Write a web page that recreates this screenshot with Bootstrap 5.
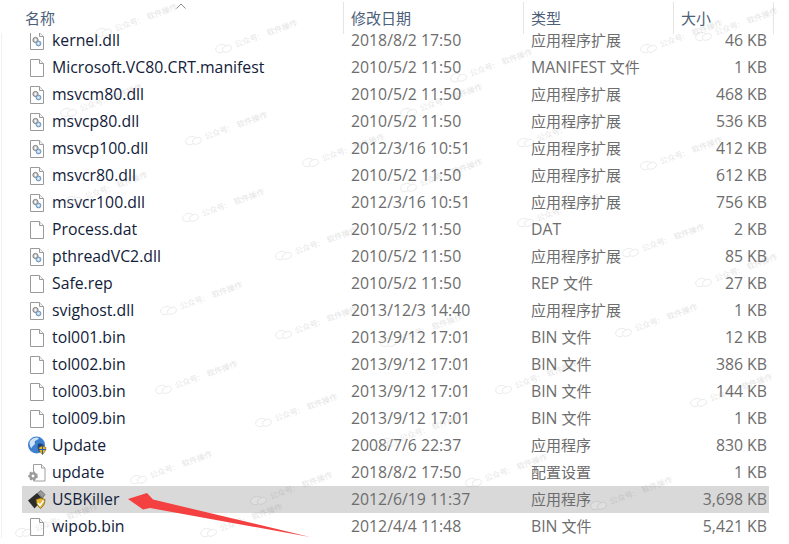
<!DOCTYPE html>
<html lang="zh-CN">
<head>
  <meta charset="UTF-8">
  <meta name="viewport" content="width=device-width, initial-scale=1">
  <title>USBKiller</title>
  <link href="https://cdn.jsdelivr.net/npm/bootstrap@5.3.0/dist/css/bootstrap.min.css" rel="stylesheet">
  <style>
    html, body { height: 100%; }
    body { background: #fff; font-family: "Open Sans", "Noto Sans CJK SC", sans-serif; font-size: 15.8px; overflow: hidden; position: relative; }
    .head-bar { height: 33px; padding-left: 2px; color: #4c607a; position: relative; z-index: 2; background: #fff; font-size: 15px; }
    .head-cell { height: 32px; margin-top: 2px; padding-top: 5px; border-right: 1px solid #e5e5e5; }
    .head-name { width: 342px; padding-left: 23px; }
    .head-date { width: 180px; padding-left: 7px; }
    .head-type { width: 150px; padding-left: 7px; }
    .head-size { width: 100px; padding-left: 7px; }
    .sort-caret { position: absolute; left: 176px; top: 3px; }
    .file-list { margin-left: 1px; border-left: 1px solid #f0f0f0; height: 511px; }
    .file-rows { margin-top: -6px; padding-left: 20px; }
    .file-row { height: 27px; width: 747px; line-height: 27px; color: #6d6d6d; white-space: nowrap; }
    .file-row.picked { background: #d9d9d9; }
    .col-name { width: 329px; color: #12213a; display: flex; align-items: center; }
    .col-name svg { margin: 0 5px 0 5px; flex: none; }
    .col-date { width: 180px; }
    .col-type { width: 150px; font-size: 15px; }
    .col-type span { font-size: 15.8px; }
    .col-size { width: 86px; text-align: right; }
    .stamp { position: absolute; display: flex; align-items: center; gap: 3px; opacity: .16; transform: rotate(-20deg); transform-origin: left center; white-space: nowrap; pointer-events: none; font-size: 8px; color: #555; line-height: 1; z-index: 3; }
    .stamp span { margin-right: 5px; }
    .pointer-arrow { position: absolute; left: 0; top: 0; pointer-events: none; z-index: 4; }
  </style>
</head>
<body>
  <svg width="0" height="0" class="position-absolute">
    <symbol id="i-blank" viewBox="0 0 20 20">
      <path d="M3.500 1.500h9l4 4v13h-13z" fill="#fff" stroke="#9a9a9a"/>
      <path d="M12.500 1.500v4h4" fill="#f2f2f2" stroke="#9a9a9a"/>
    </symbol>
    <symbol id="i-dll" viewBox="0 0 20 20">
      <path d="M3.500 1.500h9l4 4v13h-13z" fill="#fff" stroke="#9a9a9a"/>
      <path d="M12.500 1.500v4h4" fill="#f2f2f2" stroke="#9a9a9a"/>
      <circle cx="8.500" cy="9" r="2.600" fill="#cfcfcf" stroke="#7d7d7d"/>
      <circle cx="8.500" cy="9" r=".9" fill="#fff"/>
      <circle cx="11.500" cy="12.500" r="2.400" fill="#b4d0e8" stroke="#6b93b8"/>
      <circle cx="11.500" cy="12.500" r=".8" fill="#fff"/>
    </symbol>
    <symbol id="i-globe" viewBox="0 0 20 20">
      <circle cx="9.500" cy="9" r="8.500" fill="#3f7fd0"/>
      <path d="M3 5c3-4 7-4 9-3-1 2-3 2-4 3s1 3-1 4-2 3-3 3c-1-2-2-4-1-7z" fill="#cfe3f7"/>
      <path d="M11 8c3-1 5 0 6 2-1 3-3 5-5 6-1-2-2-6-1-8z" fill="#16447f"/>
      <path d="M12 11.500l3.500-1.500 3.500 1.500c0 3-1.500 5-3.500 7-2-2-3.500-4-3.500-7z" fill="#f0b429" stroke="#8a6510" stroke-width=".6"/>
      <path d="M15.500 10v8.500M12 13.500h7" stroke="#2d5fa5" stroke-width="1"/>
    </symbol>
    <symbol id="i-conf" viewBox="0 0 20 20">
      <path d="M6.500 1.500h8l3.500 3.500v13h-11.500z" fill="#fff" stroke="#a0a0a0"/>
      <path d="M14.500 1.500v3.500h3.500" fill="#f2f2f2" stroke="#a0a0a0"/>
      <circle cx="6" cy="13" r="3.800" fill="#9a9a9a" stroke="#9a9a9a" stroke-width="2" stroke-dasharray="2 1.500"/>
      <circle cx="6" cy="13" r="1.400" fill="#fff"/>
    </symbol>
    <symbol id="i-usb" viewBox="0 0 20 20">
      <path d="M1 10.500l9-7.500 6 6-8.500 9.500z" fill="#2b2b2b"/>
      <path d="M10.500 3l3.500-2.500 4 4-2.500 3.500z" fill="#9a9a9a" stroke="#4a4a4a" stroke-width=".6"/>
      <path d="M9 9.500l4.500-1.500 4.500 1.500c0 4.500-2 7-4.500 9-2.500-2-4.500-4.500-4.500-9z" fill="#e5b531" stroke="#6d5512" stroke-width=".7"/>
      <path d="M11 13l2 2.500 3.500-5" fill="none" stroke="#fff" stroke-width="1.500"/>
    </symbol>
    <symbol id="i-cloud" viewBox="0 0 22 14">
      <ellipse cx="8" cy="6" rx="7" ry="5" fill="#fff" stroke="#777"/>
      <ellipse cx="15" cy="9" rx="6" ry="4" fill="#fff" stroke="#777"/>
    </symbol>
  </svg>

  <div class="head-bar d-flex">
    <div class="head-cell head-name">名称</div>
    <div class="head-cell head-date">修改日期</div>
    <div class="head-cell head-type">类型</div>
    <div class="head-cell head-size">大小</div>
    <svg class="sort-caret" width="10" height="6" viewBox="0 0 10 6"><path d="M.5 5.500 5 1l4.500 4.500" fill="none" stroke="#8a8a8a"/></svg>
  </div>

  <div class="file-list">
    <div class="file-rows" id="rows"></div>
  </div>

  <svg class="pointer-arrow" width="789" height="544" viewBox="0 0 789 544">
    <path d="M128 499 147 493 153 499.500 310 537 150 508 143 509.500z" fill="#f44040"/>
  </svg>

  <script>
    var files = [
      ['kernel.dll', '2018/8/2 17:50', '应用程序扩展', '46 KB', 'dll'],
      ['Microsoft.VC80.CRT.manifest', '2010/5/2 11:50', 'MANIFEST 文件', '1 KB', 'blank'],
      ['msvcm80.dll', '2010/5/2 11:50', '应用程序扩展', '468 KB', 'dll'],
      ['msvcp80.dll', '2010/5/2 11:50', '应用程序扩展', '536 KB', 'dll'],
      ['msvcp100.dll', '2012/3/16 10:51', '应用程序扩展', '412 KB', 'dll'],
      ['msvcr80.dll', '2010/5/2 11:50', '应用程序扩展', '612 KB', 'dll'],
      ['msvcr100.dll', '2012/3/16 10:51', '应用程序扩展', '756 KB', 'dll'],
      ['Process.dat', '2010/5/2 11:50', 'DAT', '2 KB', 'blank'],
      ['pthreadVC2.dll', '2010/5/2 11:50', '应用程序扩展', '85 KB', 'dll'],
      ['Safe.rep', '2010/5/2 11:50', 'REP 文件', '27 KB', 'blank'],
      ['svighost.dll', '2013/12/3 14:40', '应用程序扩展', '1 KB', 'dll'],
      ['tol001.bin', '2013/9/12 17:01', 'BIN 文件', '12 KB', 'blank'],
      ['tol002.bin', '2013/9/12 17:01', 'BIN 文件', '386 KB', 'blank'],
      ['tol003.bin', '2013/9/12 17:01', 'BIN 文件', '144 KB', 'blank'],
      ['tol009.bin', '2013/9/12 17:01', 'BIN 文件', '1 KB', 'blank'],
      ['Update', '2008/7/6 22:37', '应用程序', '830 KB', 'globe'],
      ['update', '2018/8/2 17:50', '配置设置', '1 KB', 'conf'],
      ['USBKiller', '2012/6/19 11:37', '应用程序', '3,698 KB', 'usb'],
      ['wipob.bin', '2012/4/4 11:48', 'BIN 文件', '5,421 KB', 'blank']
    ];
    document.getElementById('rows').innerHTML = files.map(function (f) {
      return '<div class="file-row d-flex' + (f[0] === 'USBKiller' ? ' picked' : '') + '">' +
        '<div class="col-name"><svg width="20" height="20"><use href="#i-' + f[4] + '"/></svg>' + f[0] + '</div>' +
        '<div class="col-date">' + f[1] + '</div>' +
        '<div class="col-type">' + f[2].replace(/[A-Z]+/, '<span>$&</span>') + '</div>' +
        '<div class="col-size">' + f[3] + '</div></div>';
    }).join('');

    // faint watermark stamps, cloud position read off the reference
    var stamps = [[95,30],[215,46],[450,75],[640,46],[695,34],[185,138],[302,160],[65,198],[182,215],[275,253],[517,140],[640,163],[517,220],[622,250],[400,185],[160,308],[275,332],[155,387],[255,420],[130,477],[250,498],[15,530],[615,330],[495,387],[590,503],[465,480],[380,340],[690,400],[60,110],[400,110],[695,280],[380,440],[200,530]];
    stamps.forEach(function (p) {
      var s = document.createElement('div');
      s.className = 'stamp';
      s.style.left = p[0] + 'px';
      s.style.top = p[1] + 'px';
      s.innerHTML = '<svg width="18" height="11"><use href="#i-cloud"/></svg><span>公众号:</span><span>软件操作</span>';
      document.body.appendChild(s);
    });
  </script>
  <script src="https://cdn.jsdelivr.net/npm/bootstrap@5.3.0/dist/js/bootstrap.bundle.min.js"></script>
</body>
</html>
